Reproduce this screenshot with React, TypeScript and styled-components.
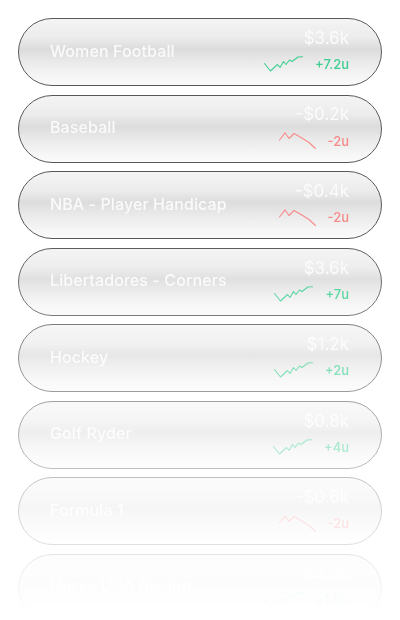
import React from 'react';
import styled, { createGlobalStyle } from 'styled-components';

type Market = {
  name: string;
  amount: string;
  units: string;
  trend: 'up' | 'down';
};

const markets: Market[] = [
  { name: 'Women Football', amount: '$3.6k', units: '+7.2u', trend: 'up' },
  { name: 'Baseball', amount: '-$0.2k', units: '-2u', trend: 'down' },
  { name: 'NBA - Player Handicap', amount: '-$0.4k', units: '-2u', trend: 'down' },
  { name: 'Libertadores - Corners', amount: '$3.6k', units: '+7u', trend: 'up' },
  { name: 'Hockey', amount: '$1.2k', units: '+2u', trend: 'up' },
  { name: 'Golf Ryder', amount: '$0.8k', units: '+4u', trend: 'up' },
  { name: 'Formula 1', amount: '-$0.6k', units: '-2u', trend: 'down' },
  { name: 'Horse USA Racing', amount: '-$4.3k', units: '+1.5u', trend: 'up' },
];

const GREEN = '#3fcf92';
const RED = '#f88a8a';

const GlobalStyle = createGlobalStyle`
  html, body {
    margin: 0;
    background: #ffffff;
    overflow: hidden;
  }
  body {
    font-family: Inter, "Noto Sans", "Liberation Sans", sans-serif;
  }
`;

// whole list fades out towards the bottom of the window
const List = styled.main`
  display: flex;
  flex-direction: column;
  gap: 8.5px;
  padding: 18px 18px 0;
  height: 620px;
  box-sizing: border-box;
  -webkit-mask-image: linear-gradient(to bottom, #000 0px, #000 240px, transparent 615px);
  mask-image: linear-gradient(to bottom, #000 0px, #000 240px, transparent 615px);
`;

const Card = styled.div`
  flex: none;
  height: 68px;
  box-sizing: border-box;
  border: 1px solid #585858;
  border-radius: 34px;
  background: linear-gradient(
    180deg,
    #f4f4f4 0%,
    #ececec 28%,
    #dcdcdc 46%,
    #e9e9e9 64%,
    #f6f6f6 88%,
    #fafafa 100%
  );
  display: flex;
  align-items: center;
  justify-content: space-between;
  padding: 0 32px 0 31px;
`;

const Title = styled.span`
  color: #fafafa;
  font-size: 16px;
  font-weight: 500;
  letter-spacing: 0.1px;
  margin-top: -3px;
`;

const Stats = styled.div`
  display: flex;
  flex-direction: column;
  align-items: flex-end;
  gap: 8px;
  margin-top: -4px;
`;

const Amount = styled.span`
  color: #fbfbfb;
  font-size: 17px;
  font-weight: 400;
  line-height: 20px;
`;

const Trend = styled.div`
  display: flex;
  align-items: center;
  gap: 12px;
`;

const Units = styled.span<{ $up: boolean }>`
  color: ${(p) => (p.$up ? GREEN : RED)};
  font-size: 13px;
  font-weight: 500;
  line-height: 16px;
`;

const Spark = ({ up }: { up: boolean }) =>
  up ? (
    <svg width="39" height="16" viewBox="0 0 39 16" fill="none">
      <polyline
        points="0.5,7.5 6.5,15 13.5,8.5 16,11.5 19.5,5.5 22,8.5 25.5,4 28,5.5 34,1 38.5,0.8"
        stroke={GREEN}
        strokeWidth="1.1"
        strokeLinejoin="round"
        strokeLinecap="round"
      />
    </svg>
  ) : (
    <svg width="37" height="17" viewBox="0 0 37 17" fill="none">
      <polyline
        points="0.5,8 6,0.8 10,6.5 15,1.5 22,5.5 30,10.5 36.5,16.5"
        stroke={RED}
        strokeWidth="1.1"
        strokeLinejoin="round"
        strokeLinecap="round"
      />
    </svg>
  );

const App = () => {
  return (
    <>
      <GlobalStyle />
      <List>
        {markets.map((m) => (
          <Card key={m.name}>
            <Title>{m.name}</Title>
            <Stats>
              <Amount>{m.amount}</Amount>
              <Trend>
                <Spark up={m.trend === 'up'} />
                <Units $up={m.units.startsWith('+')}>{m.units}</Units>
              </Trend>
            </Stats>
          </Card>
        ))}
      </List>
    </>
  );
};

export default App;
